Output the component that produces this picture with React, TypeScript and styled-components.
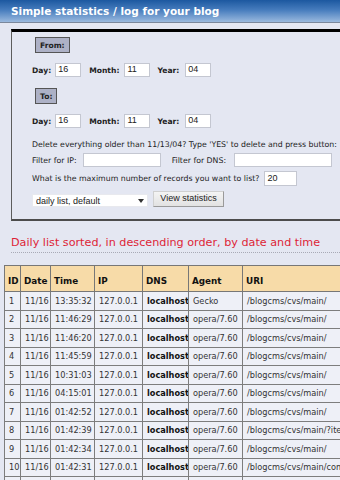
import React from 'react';
import styled, { createGlobalStyle } from 'styled-components';

const GlobalStyle = createGlobalStyle`
  html, body {
    margin: 0;
    padding: 0;
    overflow: hidden;
    background: #e4e7f2;
    font-family: "DejaVu Sans", Verdana, sans-serif;
    color: #222;
  }
`;

const Page = styled.div`
  width: 420px;
`;

const TitleBar = styled.div`
  height: 22px;
  display: flex;
  align-items: center;
  padding-left: 11px;
  background: linear-gradient(#1c58a0 0%, #467cbd 45%, #9ab9de 100%);
  border-bottom: 1px solid #7a879b;
  color: #fff;
  font-weight: bold;
  font-size: 10.5px;
  white-space: nowrap;
`;

const Main = styled.div`
  padding-left: 11px;
`;

const FormBox = styled.div`
  width: 390px;
  margin-top: 6px;
  border-top: 3px solid #000;
  border-left: 1px solid #5c5c5c;
  border-bottom: 2px solid #4c4c4c;
  padding: 5px 0 12px 20px;
  font-size: 7.8px;
`;

const Tag = styled.div<{ $mt?: number }>`
  display: inline-flex;
  align-items: center;
  height: 16px;
  box-sizing: border-box;
  margin: ${p => p.$mt ?? 0}px 0 0 3px;
  padding: 0 4px;
  background: #adb1c6;
  border: 1px solid #555;
  font-weight: bold;
  font-size: 7.6px;
`;

const Row = styled.div<{ $mt: number; $h?: number }>`
  display: flex;
  align-items: center;
  margin-top: ${p => p.$mt}px;
  height: ${p => p.$h ?? 14}px;
  white-space: nowrap;
`;

const Label = styled.span<{ $gap?: number }>`
  font-weight: bold;
  font-size: 7.6px;
  margin-right: ${p => p.$gap ?? 4}px;
`;

const Text = styled.span<{ $gap?: number }>`
  margin-right: ${p => p.$gap ?? 5}px;
`;

const Field = styled.input<{ $w: number; $h?: number; $after?: number }>`
  box-sizing: border-box;
  width: ${p => p.$w}px;
  height: ${p => p.$h ?? 14}px;
  margin: 0 ${p => p.$after ?? 0}px 0 0;
  padding: 0 2px 2px;
  border: 1px solid #c4c7d1;
  background: #fff;
  font-family: "Liberation Sans", Arial, sans-serif;
  font-size: 9px;
  color: #222;
  outline: none;
`;

const Line = styled.div`
  margin-top: 11px;
  height: 12px;
  line-height: 12px;
  white-space: nowrap;
`;

const SelectWrap = styled.div`
  position: relative;
  width: 116px;
  height: 13px;
  margin: 4px 5px 0 0;
`;

const Select = styled.select`
  appearance: none;
  width: 100%;
  height: 100%;
  box-sizing: border-box;
  margin: 0;
  padding: 0 3px;
  border: 1px solid #e8e9ee;
  background: #fff;
  font-family: "Liberation Sans", Arial, sans-serif;
  font-size: 9px;
  color: #222;
`;

const Arrow = styled.span`
  position: absolute;
  right: 4px;
  top: 5px;
  width: 0;
  height: 0;
  border-left: 3px solid transparent;
  border-right: 3px solid transparent;
  border-top: 4px solid #333;
  pointer-events: none;
`;

const Button = styled.button`
  box-sizing: border-box;
  width: 71px;
  height: 16px;
  margin: 0;
  padding: 0 0 2px;
  border: 1px solid #9a9a9a;
  border-top-color: #d0d0d0;
  border-left-color: #d0d0d0;
  background: linear-gradient(#f4f4f4, #e2e2e2);
  font-family: "Liberation Sans", Arial, sans-serif;
  font-size: 9px;
  color: #222;
`;

const Heading = styled.h2`
  margin: 15px 0 0;
  padding-bottom: 2px;
  height: 14px;
  line-height: 14px;
  border-bottom: 1px dotted #a8aab6;
  color: #de1f37;
  font-weight: normal;
  font-size: 11.2px;
  white-space: nowrap;
`;

const Table = styled.table`
  margin: 12px 0 0 4px;
  border-collapse: collapse;
  table-layout: fixed;
  width: 400px;
  font-size: 8.2px;
  color: #333;
`;

const Th = styled.th`
  height: 21px;
  padding: 4px 3px 0;
  background: #f7dba8;
  border: 1px solid #777;
  text-align: left;
  font-size: 8.8px;
  color: #111;
  white-space: nowrap;
`;

const Tr = styled.tr`
  height: 18.5px;
`;

const Td = styled.td<{ $bold?: boolean }>`
  padding: 0 2px 0 4px;
  background: #eef0f7;
  border: 1px solid #7d7d7d;
  white-space: nowrap;
  overflow: hidden;
  font-weight: ${p => (p.$bold ? 'bold' : 'normal')};
  color: ${p => (p.$bold ? '#111' : '#333')};
`;

const log: [string, string, string][] = [
  ['13:35:32', 'Gecko', '/blogcms/cvs/main/'],
  ['11:46:29', 'opera/7.60', '/blogcms/cvs/main/'],
  ['11:46:20', 'opera/7.60', '/blogcms/cvs/main/'],
  ['11:45:59', 'opera/7.60', '/blogcms/cvs/main/'],
  ['10:31:03', 'opera/7.60', '/blogcms/cvs/main/'],
  ['04:15:01', 'opera/7.60', '/blogcms/cvs/main/'],
  ['01:42:52', 'opera/7.60', '/blogcms/cvs/main/'],
  ['01:42:39', 'opera/7.60', '/blogcms/cvs/main/?item=12'],
  ['01:42:34', 'opera/7.60', '/blogcms/cvs/main/'],
  ['01:42:31', 'opera/7.60', '/blogcms/cvs/main/comments.php'],
  ['01:42:14', 'opera/7.60', '/blogcms/cvs/main/'],
  ['01:41:58', 'opera/7.60', '/blogcms/cvs/main/'],
];

function DateRow() {
  return (
    <>
      <Label>Day:</Label>
      <Field $w={26} $after={8} defaultValue="16" />
      <Label $gap={5}>Month:</Label>
      <Field $w={26} $after={7} defaultValue="11" />
      <Label $gap={6}>Year:</Label>
      <Field $w={26} defaultValue="04" />
    </>
  );
}

export default function App() {
  return (
    <Page>
      <GlobalStyle />
      <TitleBar>Simple statistics / log for your blog</TitleBar>
      <Main>
        <FormBox>
          <Tag>From:</Tag>
          <Row $mt={10}><DateRow /></Row>
          <Tag $mt={11}>To:</Tag>
          <Row $mt={10}><DateRow /></Row>
          <Line>Delete everything older than 11/13/04? Type 'YES' to delete and press button:</Line>
          <Row $mt={2}>
            <Text $gap={6}>Filter for IP:</Text>
            <Field $w={78} $after={11} />
            <Text $gap={8}>Filter for DNS:</Text>
            <Field $w={98} />
          </Row>
          <Row $mt={4} $h={15}>
            <Text $gap={5}>What is the maximum number of records you want to list?</Text>
            <Field $w={33} $h={15} defaultValue="20" />
          </Row>
          <Row $mt={4} $h={17}>
            <SelectWrap>
              <Select defaultValue="daily">
                <option value="daily">daily list, default</option>
                <option value="ip">by IP</option>
                <option value="dns">by DNS</option>
              </Select>
              <Arrow />
            </SelectWrap>
            <Button>View statistics</Button>
          </Row>
        </FormBox>
        <Heading>Daily list sorted, in descending order, by date and time</Heading>
      </Main>
      <Table>
        <colgroup>
          <col style={{ width: 16 }} />
          <col style={{ width: 30 }} />
          <col style={{ width: 44 }} />
          <col style={{ width: 48 }} />
          <col style={{ width: 46 }} />
          <col style={{ width: 54 }} />
          <col style={{ width: 162 }} />
        </colgroup>
        <thead>
          <tr>
            <Th>ID</Th>
            <Th>Date</Th>
            <Th>Time</Th>
            <Th>IP</Th>
            <Th>DNS</Th>
            <Th>Agent</Th>
            <Th>URI</Th>
          </tr>
        </thead>
        <tbody>
          {log.map(([time, agent, uri], i) => (
            <Tr key={i}>
              <Td>{i + 1}</Td>
              <Td>11/16</Td>
              <Td>{time}</Td>
              <Td>127.0.0.1</Td>
              <Td $bold>localhost</Td>
              <Td>{agent}</Td>
              <Td>{uri}</Td>
            </Tr>
          ))}
        </tbody>
      </Table>
    </Page>
  );
}
